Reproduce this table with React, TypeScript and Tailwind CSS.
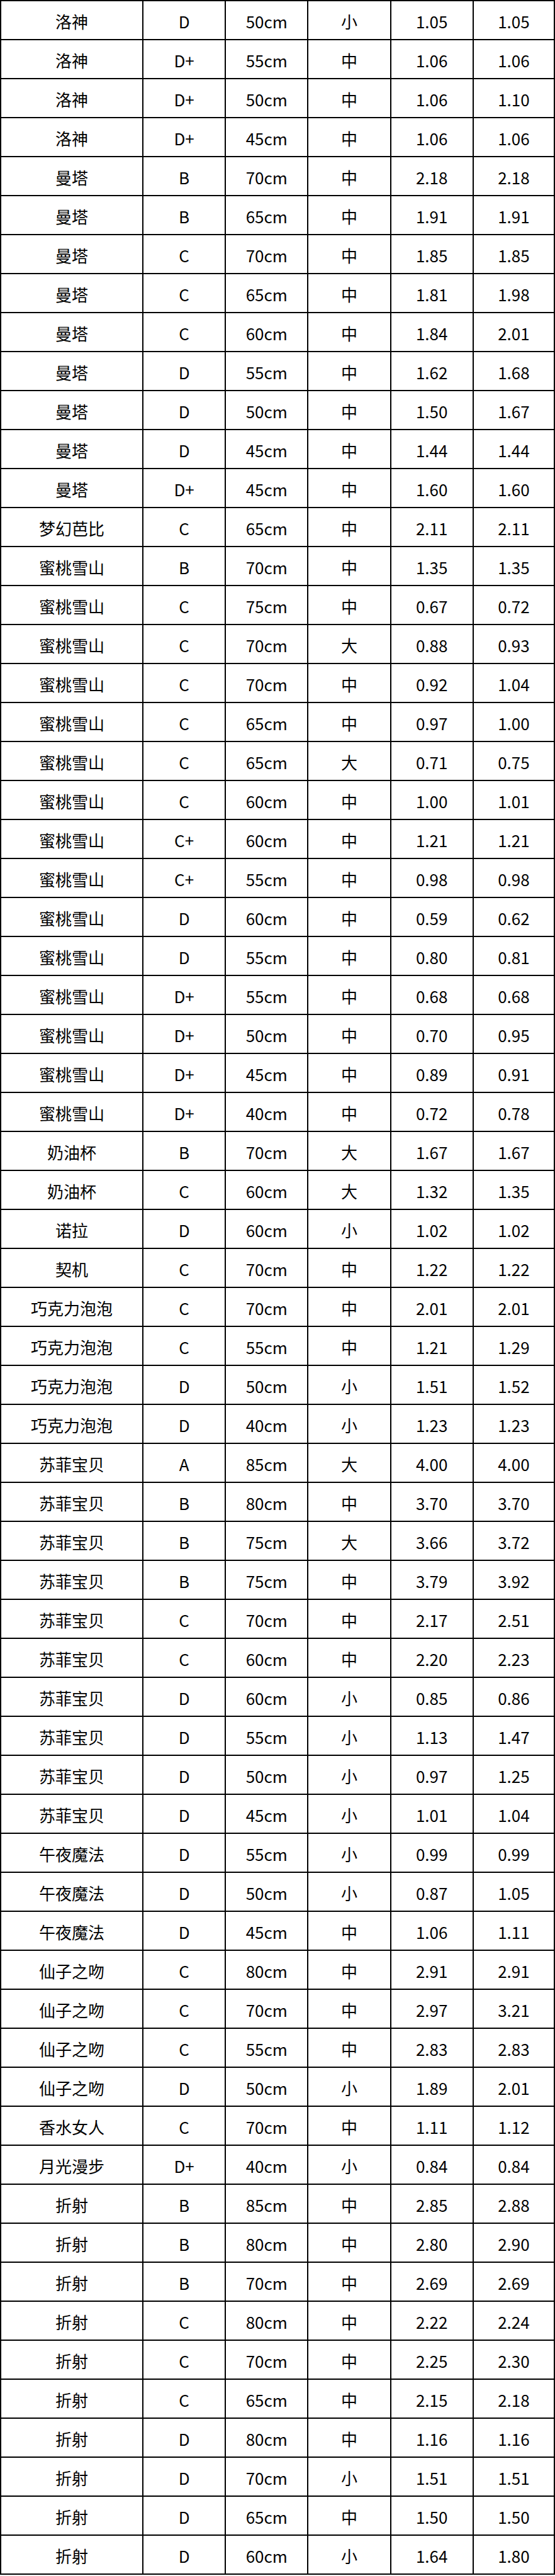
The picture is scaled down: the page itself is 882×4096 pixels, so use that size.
const rows: [string, string, string, string, string, string][] = [
  ["洛神", "D", "50cm", "小", "1.05", "1.05"],
  ["洛神", "D+", "55cm", "中", "1.06", "1.06"],
  ["洛神", "D+", "50cm", "中", "1.06", "1.10"],
  ["洛神", "D+", "45cm", "中", "1.06", "1.06"],
  ["曼塔", "B", "70cm", "中", "2.18", "2.18"],
  ["曼塔", "B", "65cm", "中", "1.91", "1.91"],
  ["曼塔", "C", "70cm", "中", "1.85", "1.85"],
  ["曼塔", "C", "65cm", "中", "1.81", "1.98"],
  ["曼塔", "C", "60cm", "中", "1.84", "2.01"],
  ["曼塔", "D", "55cm", "中", "1.62", "1.68"],
  ["曼塔", "D", "50cm", "中", "1.50", "1.67"],
  ["曼塔", "D", "45cm", "中", "1.44", "1.44"],
  ["曼塔", "D+", "45cm", "中", "1.60", "1.60"],
  ["梦幻芭比", "C", "65cm", "中", "2.11", "2.11"],
  ["蜜桃雪山", "B", "70cm", "中", "1.35", "1.35"],
  ["蜜桃雪山", "C", "75cm", "中", "0.67", "0.72"],
  ["蜜桃雪山", "C", "70cm", "大", "0.88", "0.93"],
  ["蜜桃雪山", "C", "70cm", "中", "0.92", "1.04"],
  ["蜜桃雪山", "C", "65cm", "中", "0.97", "1.00"],
  ["蜜桃雪山", "C", "65cm", "大", "0.71", "0.75"],
  ["蜜桃雪山", "C", "60cm", "中", "1.00", "1.01"],
  ["蜜桃雪山", "C+", "60cm", "中", "1.21", "1.21"],
  ["蜜桃雪山", "C+", "55cm", "中", "0.98", "0.98"],
  ["蜜桃雪山", "D", "60cm", "中", "0.59", "0.62"],
  ["蜜桃雪山", "D", "55cm", "中", "0.80", "0.81"],
  ["蜜桃雪山", "D+", "55cm", "中", "0.68", "0.68"],
  ["蜜桃雪山", "D+", "50cm", "中", "0.70", "0.95"],
  ["蜜桃雪山", "D+", "45cm", "中", "0.89", "0.91"],
  ["蜜桃雪山", "D+", "40cm", "中", "0.72", "0.78"],
  ["奶油杯", "B", "70cm", "大", "1.67", "1.67"],
  ["奶油杯", "C", "60cm", "大", "1.32", "1.35"],
  ["诺拉", "D", "60cm", "小", "1.02", "1.02"],
  ["契机", "C", "70cm", "中", "1.22", "1.22"],
  ["巧克力泡泡", "C", "70cm", "中", "2.01", "2.01"],
  ["巧克力泡泡", "C", "55cm", "中", "1.21", "1.29"],
  ["巧克力泡泡", "D", "50cm", "小", "1.51", "1.52"],
  ["巧克力泡泡", "D", "40cm", "小", "1.23", "1.23"],
  ["苏菲宝贝", "A", "85cm", "大", "4.00", "4.00"],
  ["苏菲宝贝", "B", "80cm", "中", "3.70", "3.70"],
  ["苏菲宝贝", "B", "75cm", "大", "3.66", "3.72"],
  ["苏菲宝贝", "B", "75cm", "中", "3.79", "3.92"],
  ["苏菲宝贝", "C", "70cm", "中", "2.17", "2.51"],
  ["苏菲宝贝", "C", "60cm", "中", "2.20", "2.23"],
  ["苏菲宝贝", "D", "60cm", "小", "0.85", "0.86"],
  ["苏菲宝贝", "D", "55cm", "小", "1.13", "1.47"],
  ["苏菲宝贝", "D", "50cm", "小", "0.97", "1.25"],
  ["苏菲宝贝", "D", "45cm", "小", "1.01", "1.04"],
  ["午夜魔法", "D", "55cm", "小", "0.99", "0.99"],
  ["午夜魔法", "D", "50cm", "小", "0.87", "1.05"],
  ["午夜魔法", "D", "45cm", "中", "1.06", "1.11"],
  ["仙子之吻", "C", "80cm", "中", "2.91", "2.91"],
  ["仙子之吻", "C", "70cm", "中", "2.97", "3.21"],
  ["仙子之吻", "C", "55cm", "中", "2.83", "2.83"],
  ["仙子之吻", "D", "50cm", "小", "1.89", "2.01"],
  ["香水女人", "C", "70cm", "中", "1.11", "1.12"],
  ["月光漫步", "D+", "40cm", "小", "0.84", "0.84"],
  ["折射", "B", "85cm", "中", "2.85", "2.88"],
  ["折射", "B", "80cm", "中", "2.80", "2.90"],
  ["折射", "B", "70cm", "中", "2.69", "2.69"],
  ["折射", "C", "80cm", "中", "2.22", "2.24"],
  ["折射", "C", "70cm", "中", "2.25", "2.30"],
  ["折射", "C", "65cm", "中", "2.15", "2.18"],
  ["折射", "D", "80cm", "中", "1.16", "1.16"],
  ["折射", "D", "70cm", "小", "1.51", "1.51"],
  ["折射", "D", "65cm", "中", "1.50", "1.50"],
  ["折射", "D", "60cm", "小", "1.64", "1.80"],
];

const cjk = "[font-family:'Noto_Sans_CJK_SC',sans-serif]";
const latin = "[font-family:'Liberation_Sans_Narrow','Noto_Sans_CJK_SC',sans-serif]";

export default function App() {
  return (
    <div className="w-[882px] bg-white text-black">
      <div className="border-b-2 border-black">
        {rows.map((r, i) => (
          <div
            key={i}
            className="grid h-[62px] grid-cols-[226px_repeat(5,1fr)] border-t-2 border-black"
          >
            {r.map((cell, j) => (
              <div
                key={j}
                className={`flex items-center justify-center border-l-2 border-black pt-[4px] text-[26px] leading-none ${
                  j === 5 ? "border-r-2" : ""
                } ${j === 0 || j === 3 ? cjk : latin}`}
              >
                {cell}
              </div>
            ))}
          </div>
        ))}
      </div>
    </div>
  );
}
